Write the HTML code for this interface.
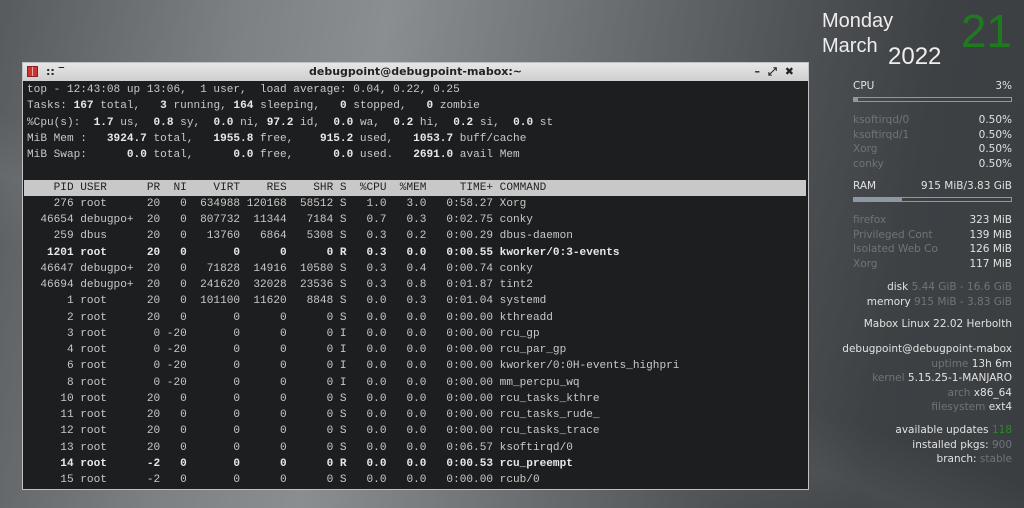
<!DOCTYPE html>
<html><head><meta charset="utf-8"><style>
*{margin:0;padding:0;box-sizing:border-box}
body{width:1024px;height:508px;overflow:hidden;position:relative;
background:linear-gradient(100deg,#575b5d 0%,#7d8183 22%,#8b8e90 35%,#6a6e71 55%,#4a4e51 75%,#3d4144 85%,#3a3e41 100%);
font-family:"Liberation Sans","DejaVu Sans",sans-serif}
.bg2{position:absolute;left:0;top:0;width:1024px;height:508px;
background:linear-gradient(200deg,rgba(0,0,0,0) 55%,rgba(255,255,255,0.06) 62%,rgba(0,0,0,0) 70%)}
.term{position:absolute;left:22px;top:62px;width:787px;height:428px;background:#1d1e1f;border:1px solid #bfc1c2}
.tb{height:18px;background:linear-gradient(#e6e6e6,#cfcfcf);position:relative;font:bold 11px "DejaVu Sans",sans-serif;color:#222;text-align:center;line-height:18px}
.ic{position:absolute;left:4px;top:3px;width:11px;height:11px;background:#c33;border:1px solid #822}
.ic:after{content:"";position:absolute;left:4px;top:0;width:1px;height:9px;background:#eaa}
.dots{position:absolute;left:23px;top:0;font-size:11px}
.btns{position:absolute;right:6px;top:0;font-size:11px;letter-spacing:8px}
pre{font-family:"Liberation Mono","DejaVu Sans Mono",monospace;font-size:11.1px;line-height:16.25px;color:#c9c9c9;padding:1px 0 0 4px;white-space:pre}
pre b{color:#e8e8e8}
.hd{display:block;background:#c8c8c8;color:#222;margin-left:-3px;padding-left:3px;width:782px}
.ck{position:absolute;left:820px;top:0;width:192px;color:#e2e2e2;font-family:"DejaVu Sans",sans-serif;font-size:10.5px}
.r{position:absolute;right:0;text-align:right;white-space:nowrap}
.l{position:absolute;left:33px;white-space:nowrap}
.d{color:#6e747a}
.bar{position:absolute;left:33px;width:159px;height:5px;border:1px solid #8c98a4}
</style></head><body><div class="bg2"></div>
<div class="term"><div class="tb"><div class="ic"></div><span class="dots">:: ‾</span>debugpoint@debugpoint-mabox:~<span class="btns">–⤢✖</span></div>
<pre>top - 12:43:08 up 13:06,  1 user,  load average: 0.04, 0.22, 0.25
Tasks: <b>167</b> total,   <b>3</b> running, <b>164</b> sleeping,   <b>0</b> stopped,   <b>0</b> zombie
%Cpu(s):  <b>1.7</b> us,  <b>0.8</b> sy,  <b>0.0</b> ni, <b>97.2</b> id,  <b>0.0</b> wa,  <b>0.2</b> hi,  <b>0.2</b> si,  <b>0.0</b> st
MiB Mem :   <b>3924.7</b> total,   <b>1955.8</b> free,    <b>915.2</b> used,   <b>1053.7</b> buff/cache
MiB Swap:      <b>0.0</b> total,      <b>0.0</b> free,      <b>0.0</b> used.   <b>2691.0</b> avail Mem

<span class="hd">    PID USER      PR  NI    VIRT    RES    SHR S  %CPU  %MEM     TIME+ COMMAND</span>    276 root      20   0  634988 120168  58512 S   1.0   3.0   0:58.27 Xorg
  46654 debugpo+  20   0  807732  11344   7184 S   0.7   0.3   0:02.75 conky
    259 dbus      20   0   13760   6864   5308 S   0.3   0.2   0:00.29 dbus-daemon
<b>   1201 root      20   0       0      0      0 R   0.3   0.0   0:00.55 kworker/0:3-events</b>
  46647 debugpo+  20   0   71828  14916  10580 S   0.3   0.4   0:00.74 conky
  46694 debugpo+  20   0  241620  32028  23536 S   0.3   0.8   0:01.87 tint2
      1 root      20   0  101100  11620   8848 S   0.0   0.3   0:01.04 systemd
      2 root      20   0       0      0      0 S   0.0   0.0   0:00.00 kthreadd
      3 root       0 -20       0      0      0 I   0.0   0.0   0:00.00 rcu_gp
      4 root       0 -20       0      0      0 I   0.0   0.0   0:00.00 rcu_par_gp
      6 root       0 -20       0      0      0 I   0.0   0.0   0:00.00 kworker/0:0H-events_highpri
      8 root       0 -20       0      0      0 I   0.0   0.0   0:00.00 mm_percpu_wq
     10 root      20   0       0      0      0 S   0.0   0.0   0:00.00 rcu_tasks_kthre
     11 root      20   0       0      0      0 S   0.0   0.0   0:00.00 rcu_tasks_rude_
     12 root      20   0       0      0      0 S   0.0   0.0   0:00.00 rcu_tasks_trace
     13 root      20   0       0      0      0 S   0.0   0.0   0:06.57 ksoftirqd/0
<b>     14 root      -2   0       0      0      0 R   0.0   0.0   0:00.53 rcu_preempt</b>
     15 root      -2   0       0      0      0 S   0.0   0.0   0:00.00 rcub/0</pre></div>
<div class="ck">
<div style="position:absolute;left:2px;top:9px;font-family:'Liberation Sans',sans-serif;font-size:20px;line-height:25px;color:#eee">Monday<br>March</div>
<div style="position:absolute;left:68px;top:43px;font-family:'Liberation Sans',sans-serif;font-size:24px;color:#eee">2022</div>
<div style="position:absolute;right:0;top:6px;font-family:'Liberation Sans',sans-serif;font-size:46px;color:#1f7a1f;line-height:50px">21</div>
<div class="l" style="top:80px">CPU</div><div class="r" style="top:80px">3%</div>
<div class="bar" style="top:97px"><div style="width:4px;height:3px;background:#8c98a4"></div></div>
<div class="l d" style="top:113px;line-height:14.5px">ksoftirqd/0<br>ksoftirqd/1<br>Xorg<br>conky</div>
<div class="r" style="top:113px;line-height:14.5px">0.50%<br>0.50%<br>0.50%<br>0.50%</div>
<div class="l" style="top:180px">RAM</div><div class="r" style="top:180px">915 MiB/3.83 GiB</div>
<div class="bar" style="top:197px"><div style="width:48px;height:3px;background:#8c98a4"></div></div>
<div class="l d" style="top:213px;line-height:14.5px">firefox<br>Privileged Cont<br>Isolated Web Co<br>Xorg</div>
<div class="r" style="top:213px;line-height:14.5px">323 MiB<br>139 MiB<br>126 MiB<br>117 MiB</div>
<div class="r" style="top:280px;line-height:14.5px">disk <span class="d">5.44 GiB - 16.6 GiB</span><br>memory <span class="d">915 MiB - 3.83 GiB</span></div>
<div class="r" style="top:318px">Mabox Linux 22.02 Herbolth</div>
<div class="r" style="top:342px;line-height:14.5px">debugpoint@debugpoint-mabox<br><span class="d">uptime</span> 13h 6m<br><span class="d">kernel</span> 5.15.25-1-MANJARO<br><span class="d">arch</span> x86_64<br><span class="d">filesystem</span> ext4</div>
<div class="r" style="top:423px;line-height:14.5px">available updates <span style="color:#2a8a2a">118</span><br>installed pkgs: <span class="d">900</span><br>branch: <span class="d">stable</span></div>
</div>
</body></html>
